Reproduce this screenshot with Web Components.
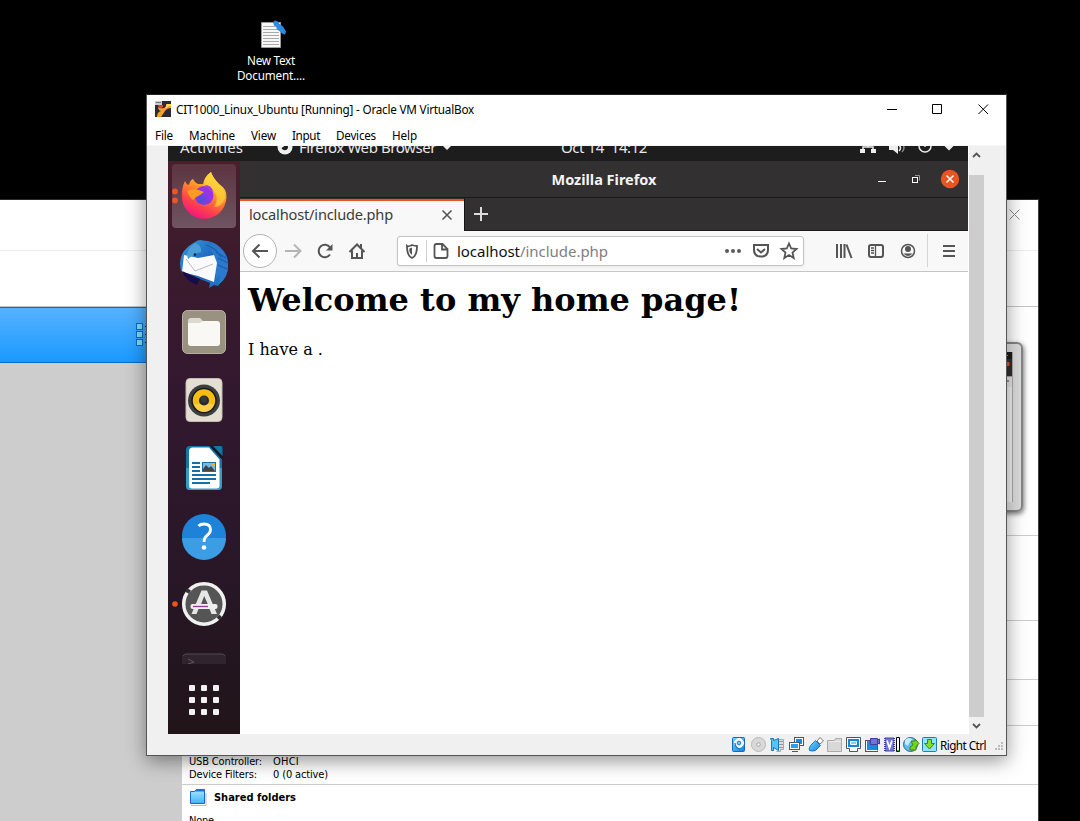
<!DOCTYPE html>
<html lang="en"><head><meta charset="utf-8"><title>Desktop</title>
<style>
html,body{margin:0;width:1080px;height:821px;overflow:hidden;background:#000;font-family:"Noto Sans","Open Sans",sans-serif}
</style></head><body>
<desk-top>
 <desk-icon></desk-icon>
 <vm-manager></vm-manager>
 <vm-window>
  <guest-screen></guest-screen>
 </vm-window>
</desk-top>
<script>
function define(name, html, extra){
  const t=document.createElement('template'); t.innerHTML=html;
  customElements.define(name, class extends HTMLElement{
    constructor(){super();this.attachShadow({mode:'open'}).appendChild(t.content.cloneNode(true));}
    connectedCallback(){ if(extra) extra(this); }
  });
}

define('desk-top',`<style>:host{display:block;position:relative;width:1080px;height:821px;overflow:hidden;background:#000}
::slotted(desk-icon){position:absolute;left:221px;top:16px}
::slotted(vm-manager){position:absolute;left:0;top:199px}
::slotted(vm-window){position:absolute;left:146px;top:94px}</style><slot></slot>`);

define('desk-icon',`<style>:host{display:flex;flex-direction:column;align-items:center;width:100px;color:#fff;font:11.7px/15px "Noto Sans",sans-serif}
svg{display:block;margin-bottom:2px}</style>
<svg width="32" height="35" viewBox="0 0 32 35"><path d="M6.500 6.500H25.500V31.500H6.500z" fill="#f7f7f7" stroke="#9b9b9b"/><path d="M8 10.500h13M8 13.500h15M8 16.500h16M8 19.500h16M8 22.500h16M8 25.500h16M8 28.500h16" stroke="#a9a9a9"/><path d="M18 6l2-1.500 3 1 1 2 4 3 3 5-1 3-3-1-2-2-3-2-1-3-2-1z" fill="#2c8adf"/></svg>
<ui-text w="48">New Text</ui-text><ui-text w="68">Document....</ui-text>`);

define('vm-manager',`<style>
:host{display:flex;flex-direction:column;box-sizing:border-box;width:1039px;height:630px;background:#fff;border-top:1px solid #2b2b2b;border-right:1px solid #3c3c3c;color:#000;font:11px/13px "DejaVu Sans Condensed","DejaVu Sans",sans-serif}
header{height:50px;border-bottom:1px solid #ececec;display:flex;justify-content:flex-end;align-items:flex-start}
header svg{margin:9px 18px 0 0}
.tools{height:55px;border-bottom:1px solid #c4c4c4}
main{flex:1;display:grid;grid-template-columns:182px 1fr}
aside{background:#cdcdcd}
.sel{box-sizing:border-box;height:56px;border:solid #0b6cc4;border-width:1px 0;background:linear-gradient(#56b2ff,#1a99ff);display:flex;justify-content:flex-start;padding:15px 0 0 136px}
section{box-sizing:border-box;border-bottom:1px solid #ccc}
.prev{height:229px;display:flex;justify-content:flex-end;padding:35px 15px 0 0}
.card{box-sizing:border-box;width:200px;height:170px;border:2px solid #858585;border-radius:6px;background:linear-gradient(90deg,#eee 86%,#dadada);box-shadow:1px 2px 5px #0008;padding:8px 8px 8px 20px}
.shot{height:150px;background:linear-gradient(#1c1c1c 0 7px,#322f30 7px 24px,#aaa 24px 25px,#e8e8e8 25px 35px,#f4f4f4 35px);border-right:1px solid #aaa;display:flex;justify-content:flex-end;box-sizing:border-box}
.usb{height:59px;padding:29px 0 0 7px}
.row{display:grid;grid-template-columns:84px 1fr}
.sf{padding:4px 0 0 7px;border:0}
h3{display:flex;align-items:center;margin:0 0 8px;font:bold 11px/17px "DejaVu Sans Condensed","DejaVu Sans",sans-serif}
h3 svg{margin-right:7px}
</style>
<header><svg width="11" height="11" viewBox="0 0 11 11"><path d="M.5.5l10 10M10.500.5l-10 10" stroke="#888"/></svg></header>
<div class="tools"></div>
<main><aside><div class="sel"><svg width="14" height="26" viewBox="0 0 14 26"><g fill="#7ddcf8" stroke="#0b6cc4"><rect x=".5" y=".5" width="6" height="6"/><rect x=".5" y="8.500" width="6" height="6"/><rect x=".5" y="16.500" width="6" height="6"/></g><path d="M9 3.500h4M9 11.500h4M9 19.500h4" stroke="#123"/></svg></div></aside>
<div><section class="prev"><div class="card"><div class="shot"><svg width="8" height="35" viewBox="0 0 8 35"><path d="M2 3.500h2" stroke="#999"/><circle cx="3.500" cy="12" r="2.300" fill="#e95420"/><path d="M1 29h4" stroke="#999" stroke-width="2"/></svg></div></div></section>
<section style="height:85px"></section><section style="height:59px"></section><section style="height:46px"></section>
<section class="usb"><div class="row"><ui-text w="73">USB Controller:</ui-text><ui-text w="26">OHCI</ui-text></div><div class="row"><ui-text w="68">Device Filters:</ui-text><ui-text w="55">0 (0 active)</ui-text></div></section>
<section class="sf"><h3><svg width="18" height="17" viewBox="0 0 18 17"><defs><linearGradient id="f" x2="0" y2="1"><stop stop-color="#a5e9ff"/><stop offset="1" stop-color="#3fb4f5"/></linearGradient></defs><path d="M2 16.500h15V4" stroke="#bbb" fill="none"/><path d="M1.500 2.500h4l2-2h8v14h-14z" fill="url(#f)" stroke="#1b66c9"/><path d="M5 2.500l2-2h9v2z" fill="#2272d8"/></svg><ui-text w="82">Shared folders</ui-text></h3><ui-text w="25">None</ui-text></section></div></main>`);

define('vm-window',`<style>
:host{display:grid;grid-template-rows:30px 21px 588px 1fr;box-sizing:border-box;width:861px;height:662px;border:1px solid #555;border-top-color:#222;background:#f0f0f0;box-shadow:0 5px 18px rgba(0,0,0,.42);color:#000;font:11.7px/16px "Noto Sans",sans-serif}
.title{display:flex;align-items:center;background:#fff;padding-left:8px}
.title .ico{margin:-2px 5px 0 0}.title ui-text{margin:-2px auto 0 0}
.caps{margin:0 17px 0 0}
nav{display:flex;gap:16px;background:#fff;padding:2px 0 0 8px;height:18px;border-bottom:1px solid #f6f6f6}
.view{display:grid;grid-template-columns:21px 800px 1px 15px 1fr}
.gap{background:#fff}
.bar{display:flex;flex-direction:column}
.thumb{flex:1;background:#cdcdcd}
.bar svg{display:block}
.status{display:flex;align-items:center;padding:0 1px 0 584px}
.status ui-text{margin-right:auto}
</style>
<div class="title"><svg class="ico" width="16" height="16" viewBox="0 0 16 16"><path d="M0 0h16v16H0z" fill="#2b2c38"/><path d="M0 0h7v4H0z" fill="#ccc"/><path d="M1 1.500h5" stroke="#777"/><path d="M3 6q3 2 6 1t2-4h5v4q-4 0-6 3t-4 6H2q0-5 4-6-3-1-3-4z" fill="#f7a128"/><path d="M3 4h5v2q-2 2-4 1z" fill="#db4524"/><path d="M10 7l2-4h4v2q-4 0-4 2z" fill="#ffd76c"/></svg><ui-text w="298">CIT1000_Linux_Ubuntu [Running] - Oracle VM VirtualBox</ui-text>
<svg class="caps" width="102" height="12" viewBox="0 0 102 12"><path d="M0 5.500h10" stroke="#000"/><path d="M45.500.5h9v9h-9zM91.500.5l9.500 9.500M101 .5l-9.500 9.500" fill="none" stroke="#000"/></svg></div>
<nav><ui-text w="18">File</ui-text><ui-text w="46">Machine</ui-text><ui-text w="25">View</ui-text><ui-text w="28">Input</ui-text><ui-text w="40">Devices</ui-text><ui-text w="25">Help</ui-text></nav>
<div class="view"><div></div><slot></slot><div class="gap"></div>
<div class="bar"><svg width="15" height="29" viewBox="0 0 15 29"><path d="M4 11l3.500-3.500 3.500 3.500" fill="none" stroke="#555" stroke-width="1.800"/></svg><div class="thumb"></div><svg width="15" height="17" viewBox="0 0 15 17"><path d="M4 7l3.500 3.500L11 7" fill="none" stroke="#555" stroke-width="1.800"/></svg></div></div>
<div class="status"><status-icons></status-icons><ui-text w="46">Right Ctrl</ui-text>
<svg width="11" height="11" viewBox="0 0 11 11" style="margin-top:6px"><path d="M7 0h2v2H7zM4 3h2v2H4zM7 3h2v2H7zM1 6h2v2H1zM4 6h2v2H4zM7 6h2v2H7z" fill="#bbb"/></svg></div>`);

define('status-icons',`<style>:host{display:block;width:209px;height:17px}svg{display:block}</style>
<svg width="209" height="17" viewBox="731 736 209 17"><defs><linearGradient id="b" x2="1" y2="1"><stop stop-color="#6ddcff"/><stop offset="1" stop-color="#147de0"/></linearGradient></defs>
<rect x="732.500" y="737.500" width="12" height="14" rx="1" fill="url(#b)" stroke="#1169c9"/><circle cx="739" cy="743" r="4.500" fill="#ecf8ff" stroke="#fff"/><circle cx="739" cy="743" r="1.800" fill="#83c7ef" stroke="#2179c5"/><path d="M735 743q0 5 5 6" fill="none" stroke="#1c78cf" stroke-width="1.300"/>
<circle cx="758.500" cy="744.500" r="7" fill="#d9d9d9" stroke="#b9b9b9"/><circle cx="758.500" cy="744.500" r="1.800" fill="#eee" stroke="#a9a9a9"/>
<path d="M778 739.500h5.500v10h-3v2h-4" fill="#ddd" stroke="#aaa"/><path d="M779 741.500h4M779 744.500h4M779 747.500h4" stroke="#999"/><path d="M770.500 738.500h3v2l5-2v12l-5-3v3h-2v-10z" fill="#53c4f5" stroke="#1c75be"/>
<rect x="794.500" y="737.500" width="9" height="8" fill="#fff" stroke="#555"/><path d="M796 739h6v5h-6z" fill="#168ae7"/><rect x="789.500" y="742.500" width="10" height="7" fill="#fff" stroke="#555"/><path d="M791 744h7v4h-7z" fill="#20a1f4"/><path d="M792 751.500h6" stroke="#555"/>
<path d="M809.500 750.500q-1-2 1-5l5-5 5 5-5 5q-3 1-6 0z" fill="url(#b)" stroke="#1c75be"/><path d="M817 741l3-3.500 3.500 3.500-3.500 3z" fill="#fff" stroke="#777"/>
<path d="M827.500 740.500h7l1-2h6v13h-14z" fill="#d8d8d8" stroke="#aaa"/><path d="M828.500 741.500h12" stroke="#ededed"/>
<path d="M846.500 737.500h14v11h-3v3h-8v-3h-3z" fill="#fff" stroke="#555"/><path d="M848 739h11v8h-11z" fill="#1487e0"/><path d="M850.500 741.500h6v3h-6z" fill="#7dd2fc" stroke="#fff"/>
<rect x="865.500" y="740.500" width="12" height="11" fill="#118ce9" stroke="#555"/><path d="M866.500 741v9.500h11" fill="none" stroke="#fff"/><path d="M870.500 738.500h7v6h-7zM877.500 740l2-1v5l-2-1z" fill="#7373d7" stroke="#403ca0"/>
<path d="M885 738h9v13h-9z" fill="#7176d7"/><path d="M885 738v13M894 738v13" stroke="#3d459d" stroke-width="2" stroke-dasharray="1 1"/><path d="M885 738h9M885 751h9" stroke="#3d459d"/><path d="M887 740.500l2.500 7.500 2.500-7.500" fill="none" stroke="#fff" stroke-width="1.800"/><path d="M896.500 737.500h3v14h-3z" fill="#fff" stroke="#000"/><path d="M897 750.500h2" stroke="#19c519"/>
<circle cx="910.500" cy="744.500" r="7" fill="#65b8ee" stroke="#286a9e"/><path d="M905 740q4-4 8 0l-4 3-1 3-3-2z" fill="#c4edff"/><path d="M911 741h4v-2l4 4.500-3 3v3.500h-6v-3l3-2z" fill="#77d51e" stroke="#338a0e"/>
<rect x="922.500" y="737.500" width="14" height="14" rx="1" fill="#8fe4fc" stroke="#217bb5"/><path d="M927.500 739.500h4v4h3l-5 5.500-5-5.500h3z" fill="#86dd28" stroke="#39850e"/>
</svg>`);

define('guest-screen',`<style>
:host{display:grid;grid-template:15px 573px / 72px 728px;width:800px;height:588px;overflow:hidden;background:#fff}
top-panel{grid-column:1/3}
</style><top-panel></top-panel><app-dock></app-dock><fire-fox><web-page></web-page></fire-fox>`);

define('top-panel',`<style>:host{display:grid;grid-template-columns:104px 285px 291px 1fr;height:15px;overflow:hidden;background:#1d1d1d;color:#e9e9e9;font:15px/20px "Noto Sans",sans-serif}
div{display:flex;height:20px;margin-top:-9px;align-items:center}svg{display:block}</style>
<div style="padding-left:12px"><ui-text w="63">Activities</ui-text></div>
<div style="padding-left:4px"><svg width="18" height="18" viewBox="0 0 18 18" style="margin-right:5px"><circle cx="9" cy="9" r="7.500" fill="#eee"/><path d="M6 6q6-3 6 4-2 4-6 1-1-2 2-2z" fill="#1d1d1d"/></svg><ui-text w="137">Firefox Web Browser</ui-text><svg width="12" height="10" viewBox="0 0 12 10" style="margin-left:5px"><path d="M1 3h10l-5 5z" fill="#eee"/></svg></div>
<div style="padding-left:4px"><ui-text w="86">Oct 14&nbsp; 14:12</ui-text></div>
<div><svg width="110" height="20" viewBox="0 0 110 20"><g fill="none" stroke="#eee" stroke-width="1.500"><path d="M20 5v5M15 14v-4h10v4"/><circle cx="77" cy="9" r="6"/><path d="M77 4v6"/><path d="M51 8q3 3 0 6" /><path d="M54 6q4 5 0 9" stroke="#888"/></g><path d="M12 12h5v4h-5zM23 12h5v4h-5zM41 8h4l5-5v14l-5-4h-4zM96 8.500h10l-5 5z" fill="#eee"/></svg></div>`);

define('app-dock',`<style>:host{display:flex;flex-direction:column;height:573px;background:linear-gradient(#4a1f2c 0,#3d1b2d 15%,#32182f 40%,#291728 70%,#22151d 92%,#211519 100%);box-sizing:border-box;padding-top:1px}
svg{display:block;flex:none}</style>
<svg width="72" height="68" viewBox="0 0 72 68"><defs><linearGradient id="a" x1=".8" x2=".3" y2="1"><stop stop-color="#fff04b"/><stop offset=".4" stop-color="#ff9a25"/><stop offset=".75" stop-color="#ff3e50"/><stop offset="1" stop-color="#ef1283"/></linearGradient><radialGradient id="p" cx=".35" cy=".75"><stop stop-color="#4d50d8"/><stop offset="1" stop-color="#9834e8"/></radialGradient><linearGradient id="t" x2="0" y2="1"><stop stop-color="#fff" stop-opacity=".1"/><stop offset="1" stop-color="#fff" stop-opacity=".25"/></linearGradient></defs>
<rect x="4" y="2" width="64" height="64" rx="4" fill="url(#t)"/><circle cx="7" cy="29.500" r="2.900" fill="#f05423"/><circle cx="7" cy="38.500" r="2.900" fill="#f05423"/>
<path d="M17 19q1 3 4 4 1-5 4-6 1 3 5 5l6 0q0-7 7-12 2 6 8 12 8 5 7.500 13A22.300 22.300 0 0 1 13.800 34q-.3-8 3.200-15z" fill="url(#a)"/><path d="M35 22q1-7 8-12 2 6 8 12 7 6 6 14-3 9-11 9 5-7 1-14-3-7-12-9z" fill="#ffd43b" opacity=".7"/><circle cx="36" cy="33.500" r="9.500" fill="url(#p)"/><path d="M19 29q7-4 17 1l-4 3q-5 2-7 5-4-3-6-9z" fill="#ff9b1d"/><path d="M37 23q6 0 8 6l-4-1z" fill="#a33bea"/></svg>
<svg width="72" height="68" viewBox="0 0 72 68"><defs><linearGradient id="tb" x2="1" y2="1"><stop stop-color="#3d9bdd"/><stop offset=".5" stop-color="#1d65bc"/><stop offset="1" stop-color="#2179c9"/></linearGradient></defs>
<path d="M27 12q4-3 8-1.500 10 0 17 6.500 9 8 8 18 0 12-8 18l-2 3-4-1-5 3 1-5-15-6-14-6q-3-12 3-20 5-6 11-9z" fill="url(#tb)"/><path d="M45 13q15 8 15 22 0 13-9 19l1-9-4 4 0-9-4 3q6-16-4-27z" fill="#2a79cc"/><path d="M48 22l10 6M50 28l10 5M50 35l9 4M38 15q10 3 15 12" fill="none" stroke="#1a5eab" stroke-width="1.200"/><path d="M14 42l2-17 5 1 9 2 16-3 3 8-3 19-16-6z" fill="#fafafa"/><path d="M18 29l9 12 18-7" fill="none" stroke="#bbb"/><path d="M14 41q4 10 15 14l3-6z" fill="#180d48"/><path d="M20 29q-3-9 7-16 7 2 6 9-4 1-9 4z" fill="#4a9fd6"/><circle cx="27" cy="24.500" r="1.300" fill="#123"/></svg>
<svg width="72" height="68" viewBox="0 0 72 68"><rect x="14.500" y="12.500" width="43" height="43" rx="5" fill="#999280" stroke="#b6af9e"/><path d="M20 23q0-3 3-3h9l3 3h13v10H20z" fill="#dcd9cf"/><rect x="20" y="25" width="32" height="23" rx="3" fill="#f9f8f5"/><path d="M20 29v-4q6 0 10 1l5-3h14q3 0 3 3v8z" fill="#f9f8f5"/></svg>
<svg width="72" height="68" viewBox="0 0 72 68"><rect x="18" y="12.500" width="36" height="43" rx="4" fill="#e3dfd3" stroke="#c2bbb0"/><circle cx="36" cy="34.500" r="16" fill="#3c3e42"/><circle cx="36" cy="34.500" r="12" fill="#f3bd14" stroke="#17191c" stroke-width="1.500"/><path d="M26 38h20q-3 8-10 8t-10-8z" fill="#fad04a"/><circle cx="36" cy="34.500" r="5" fill="#24292d"/><circle cx="36" cy="33.500" r="3" fill="#383b3e"/></svg>
<svg width="72" height="68" viewBox="0 0 72 68"><rect x="18" y="12" width="36" height="44" rx="4" fill="#1476a7"/><path d="M18 34h36v18q0 4-4 4H22q-4 0-4-4z" fill="#349cc8"/><path d="M24 13.500h17l10.500 12v26q0 3-3 3H24q-3 0-3-3V17q0-3 3-3.500z" fill="#fff"/><path d="M41 11.500h13.500V26z" fill="#151923"/><path d="M45 12h8q1.500 0 1.500 2v8z" fill="#1476a7"/><path d="M24 29h8M24 33h8M24 37h8M24 41h24M24 45h24M24 49h18" stroke="#1271a5" stroke-width="1.800"/><rect x="34.500" y="28.500" width="13" height="9" fill="#72bde8" stroke="#1271a5"/><path d="M35 37v-2l3-4 3 3 2-2 4 5z" fill="#444"/><path d="M44 29h3v3h-3z" fill="#f1b626"/></svg>
<svg width="72" height="68" viewBox="0 0 72 68"><circle cx="36" cy="34" r="22" fill="#1d82d8"/><path d="M14 36h44a22 22 0 0 1-44 0z" fill="#3b9de3"/><path d="M30.500 24q2-2 5.500-2 6.500 0 6.500 5.500 0 3.500-3.500 6-3 2-3 6.500" fill="none" stroke="#fff" stroke-width="2.800"/><circle cx="36" cy="45.500" r="2.300" fill="#fff"/></svg>
<svg width="72" height="68" viewBox="0 0 72 68"><circle cx="7" cy="34" r="2.800" fill="#e95420"/><circle cx="36" cy="34" r="20.300" fill="#555" stroke="#f1f1f1" stroke-width="3.500"/><path d="M18 20l4 2M50 46l3 3" stroke="#333" stroke-width="4"/><path d="M33.500 20.500h5.500l10 23.500h-5.500l-2-5H30.500l-2 5h-5zM36.200 26l-3.500 9h7.500z" fill="#e6e6e6" fill-rule="evenodd"/><rect x="22.500" y="34" width="27" height="5" rx="2" fill="#eee"/><path d="M25 36.500h15" stroke="#963a99" stroke-width="1.300"/></svg>
<svg width="72" height="26" viewBox="0 0 72 26"><path d="M14 26v-6q0-4 4-4h36q4 0 4 4v6z" fill="#30252e"/><path d="M15 18q1-2 3-2h36q2 0 3 2" fill="none" stroke="#544b52"/><path d="M20 21l6 3-6 2" fill="none" stroke="#5f565e"/></svg>
<svg width="72" height="70" viewBox="0 0 72 70"><g fill="#f2f0f0"><rect x="21" y="21" width="6" height="6" rx="1"/><rect x="33" y="21" width="6" height="6" rx="1"/><rect x="45" y="21" width="6" height="6" rx="1"/><rect x="21" y="33" width="6" height="6" rx="1"/><rect x="33" y="33" width="6" height="6" rx="1"/><rect x="45" y="33" width="6" height="6" rx="1"/><rect x="21" y="45" width="6" height="6" rx="1"/><rect x="33" y="45" width="6" height="6" rx="1"/><rect x="45" y="45" width="6" height="6" rx="1"/></g></svg>`);

define('fire-fox',`<style>
:host{display:grid;grid-template-rows:36px 34px 41px 1fr;height:573px;color:#3b3b3b;font:15px/20px "Noto Sans",sans-serif}
.tb{display:grid;grid-template-columns:1fr 105px 1fr;align-items:center;background:#333031;color:#f4f4f4;font-weight:bold;font-size:14.5px}
.tb svg{justify-self:end;margin-right:8px}
.tabs{box-sizing:border-box;display:flex;align-items:flex-end;background:#333031;border:solid #1b1a1b;border-width:1px 0}
.tab{box-sizing:border-box;width:224px;height:32px;margin-bottom:-1px;border-top:2px solid #e95420;background:#f8f8f8;display:flex;align-items:center;padding:0 11px 0 9px;justify-content:space-between}
.tab ui-text{margin-bottom:4px;font-size:14.6px}.tab svg{margin-bottom:2px}
.plus{padding-left:9px;border-left:1px solid #151515;height:32px;display:flex;align-items:center}
.nav{box-sizing:border-box;background:#f8f8f8;border-bottom:1px solid #c5c5c5;display:flex;align-items:center}
.url{box-sizing:border-box;width:407px;height:30px;margin:0 29px 0 26px;border:1px solid #c3c3c3;border-radius:3px;background:#fff;display:flex;align-items:center;box-shadow:0 1px 3px #0001}
.url ui-text{margin:0 auto 0 8px;color:#808080}.url b{font-weight:400;color:#111}
svg{display:block;flex:none}
.s{fill:none;stroke:#555;stroke-width:2}
</style>
<div class="tb"><span></span><ui-text w="105" style="margin-bottom:1px">Mozilla Firefox</ui-text><svg width="82" height="20" viewBox="0 0 82 20"><path d="M0 12.500h8" stroke="#fff"/><path d="M37 6.500h4.500v5" stroke="#999" fill="none"/><rect x="34.500" y="8.500" width="5" height="5" fill="none" stroke="#fff"/><circle cx="72" cy="10" r="9.200" fill="#e95420"/><path d="M68.500 6.500l7 7M75.500 6.500l-7 7" stroke="#fff" stroke-width="1.500"/></svg></div>
<div class="tabs"><div class="tab"><ui-text w="144">localhost/include.php</ui-text><svg width="12" height="12" viewBox="0 0 12 12"><path d="M1.500 1.500l9 9M10.500 1.500l-9 9" class="s" style="stroke-width:1.600"/></svg></div><div class="plus"><svg width="14" height="14" viewBox="0 0 14 14"><path d="M7 0v14M0 7h14" stroke="#ddd" stroke-width="2"/></svg></div></div>
<div class="nav"><svg width="131" height="40" viewBox="0 0 131 40"><circle cx="20" cy="20" r="16.500" fill="#fff" stroke="#b3b3b3"/><path class="s" d="M28 20H13M19.500 13.500L13 20l6.500 6.500"/><path class="s" style="stroke:#b5b5b5" d="M45 20h15M54 13.500l6.500 6.500-6.500 6.500"/><path class="s" d="M90 16.500A6.200 6.200 0 1 0 90 23.500"/><path d="M92.500 13v6.500H86z" fill="#555"/><path class="s" d="M109.500 21L117 13.500l7.500 7.500M112 19.500V27h10v-7.500M117 27v-5"/><path d="M121 13v4" stroke="#555" stroke-width="2"/></svg>
<div class="url"><svg width="51" height="28" viewBox="0 0 51 28"><path class="s" style="stroke-width:1.800" d="M14 8q-4 2-5 1 0 10 5 12 5-2 5-12-2 0-5-1z"/><path d="M14 10.500v7.500q-3-2-2.700-6.500z" fill="#555"/><path d="M28.500 3v22" stroke="#ccc"/><path class="s" style="stroke-width:1.800" d="M38.500 7h6l5 5v7q0 2-2 2h-9q-2 0-2-2V9q0-2 2-2zM44 7v5.500h5.500"/></svg><ui-text w="151"><b>localhost</b>/include.php</ui-text>
<svg width="80" height="28" viewBox="0 0 80 28"><g fill="#5a5a5a"><circle cx="4" cy="14" r="2"/><circle cx="10" cy="14" r="2"/><circle cx="16" cy="14" r="2"/></g><path class="s" d="M31 8h14v4.500q0 7-7 7t-7-7zM34 12l4 3.500L42 12"/><path class="s" style="stroke-width:1.800" d="M66 6.500l2.200 5 5.300.5-4 3.600 1.200 5.400-4.700-2.900-4.700 2.900 1.200-5.400-4-3.600 5.300-.5z"/></svg></div>
<svg width="132" height="40" viewBox="-1 0 132 40"><path class="s" d="M3 13v14M7 13v14M10.500 13v14M12.500 13.500L17.500 27"/><rect class="s" x="35" y="14" width="14" height="12" rx="2"/><path class="s" style="stroke-width:1.300" d="M41.500 14v12M37 17h3M37 19.500h3M37 22h3"/><circle class="s" style="stroke-width:1.500" cx="74" cy="20" r="6.500"/><circle cx="74" cy="18" r="3" fill="#555"/><path d="M69.500 22.500h9q-4.500 5-9 0z" fill="#555"/><path d="M93.500 3v33" stroke="#d5d5d5"/><path class="s" d="M109 15h12M109 20h12M109 25h12"/></svg></div>
<slot></slot>`);

define('web-page',`<style>:host{display:block;background:#fff;color:#000;padding:9px 8px 0;font:16px/19px "DejaVu Serif",serif}
h1{font:bold 32px/38px "DejaVu Serif",serif;margin:0 0 21px}p{margin:0}</style><h1><ui-text w="493">Welcome to my home page!</ui-text></h1><p><ui-text w="75">I have a .</ui-text></p>`);

/* One-line label whose tracking is adjusted to fill the width given in w. */
define('ui-text',`<style>:host{display:inline-block;white-space:nowrap}span{display:inline-block}</style><span><slot></slot></span>`,el=>{
  const s=el.shadowRoot.querySelector('span'),w=+el.getAttribute('w');
  const n=el.textContent.length;
  s.style.letterSpacing=((w-s.getBoundingClientRect().width)/n)+'px';
  el.style.width=w+'px';
});
</script></body></html>
